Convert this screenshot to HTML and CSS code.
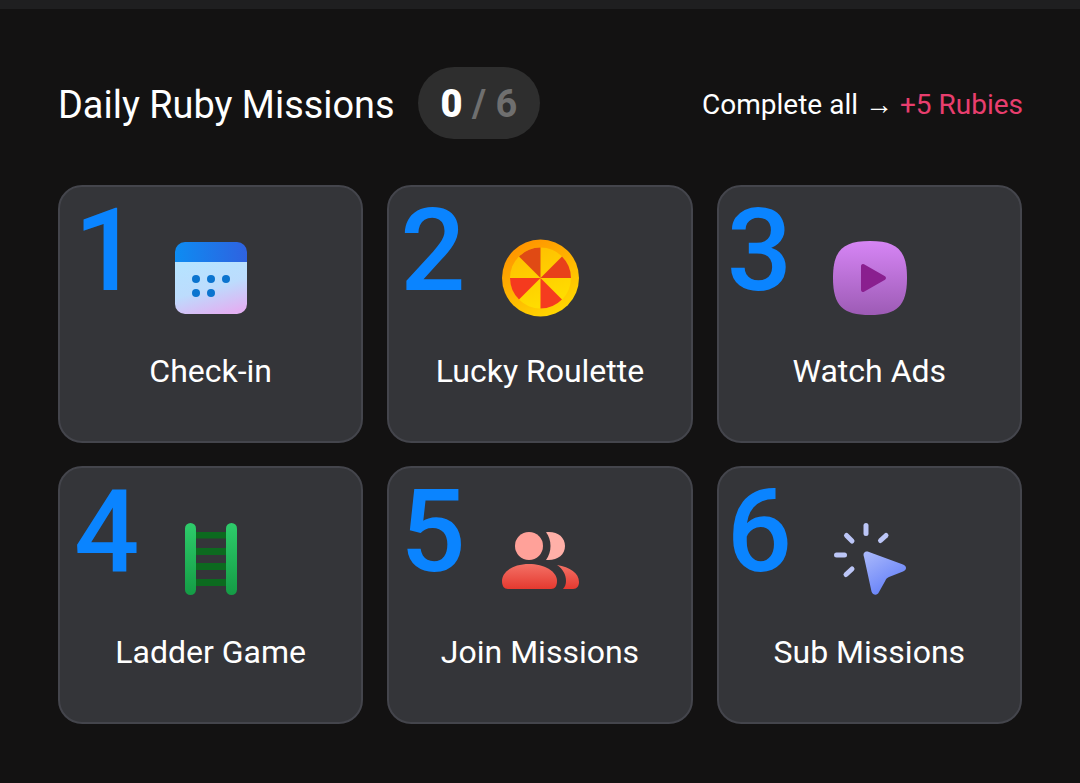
FILE: index.html
```html
<!DOCTYPE html>
<html lang="en">
<head>
  <meta charset="UTF-8">
  <meta name="viewport" content="width=device-width, initial-scale=1.0">
  <title>Daily Ruby Missions</title>
  <link rel="stylesheet" href="styles.css">
</head>
<body>
  <div class="topbar"></div>

  <div class="missions">
    <!-- Header -->
    <div class="header">
      <div class="header-left">
        <h1>Daily Ruby Missions</h1>
        <div class="counter"><b>0</b><span> / 6</span></div>
      </div>
      <p class="reward">Complete all <span class="arrow">→</span> <span class="rubies">+5 Rubies</span></p>
    </div>

    <!-- Mission cards -->
    <div class="grid">
      <div class="card">
        <span class="num">1</span>
        <svg class="icon" viewBox="0 0 80 80">
          <defs>
            <linearGradient id="calTop" x1="0" x2="1" y1="0" y2="0"><stop offset="0" stop-color="#0d8cf2"/><stop offset="1" stop-color="#2f62e0"/></linearGradient>
            <linearGradient id="calBody" x1="0.3" x2="0.7" y1="0" y2="1"><stop offset="0" stop-color="#b6e3ff"/><stop offset="0.5" stop-color="#bcdcfd"/><stop offset="1" stop-color="#e2b0f2"/></linearGradient>
          </defs>
          <path d="M4 24h72v42a10 10 0 0 1-10 10H14a10 10 0 0 1-10-10z" fill="url(#calBody)"/>
          <path d="M14 4h52a10 10 0 0 1 10 10v10H4V14a10 10 0 0 1 10-10z" fill="url(#calTop)"/>
          <g fill="#0b74cf">
            <circle cx="25" cy="41" r="4"/><circle cx="40" cy="41" r="4"/><circle cx="55" cy="41" r="4"/>
            <circle cx="25" cy="55" r="4"/><circle cx="40" cy="55" r="4"/>
          </g>
        </svg>
        <span class="label">Check-in</span>
      </div>
      <div class="card">
        <span class="num">2</span>
        <svg class="icon" viewBox="-1 0 80 80">
          <defs>
            <linearGradient id="rimGrad" x1="0.2" x2="0.8" y1="0" y2="1"><stop offset="0" stop-color="#ff9000"/><stop offset="1" stop-color="#ffdc00"/></linearGradient>
            <linearGradient id="wedgeGrad" x1="0.3" x2="0.7" y1="0" y2="1"><stop offset="0" stop-color="#ffbf00"/><stop offset="1" stop-color="#ffe000"/></linearGradient>
          </defs>
          <circle cx="39.500" cy="40" r="38.500" fill="url(#rimGrad)"/>
          <circle cx="39.500" cy="40" r="30.500" fill="url(#wedgeGrad)"/>
          <g transform="translate(-.5 0)">
            <path d="M40 40V9.500A30.500 30.500 0 0 0 18.500 18.500z" fill="#e04a14"/>
            <path d="M40 40L61.500 18.500A30.500 30.500 0 0 1 70.500 40z" fill="#e8401a"/>
            <path d="M40 40H9.500A30.500 30.500 0 0 0 18.500 61.500z" fill="#f53a1e"/>
            <path d="M40 40V70.500A30.500 30.500 0 0 0 61.500 61.500z" fill="#f53c1f"/>
          </g>
        </svg>
        <span class="label">Lucky Roulette</span>
      </div>
      <div class="card">
        <span class="num">3</span>
        <svg class="icon" viewBox="-1 0 80 80">
          <defs>
            <linearGradient id="playGrad" x1="0" x2="0" y1="0" y2="1"><stop offset="0" stop-color="#d685f5"/><stop offset="1" stop-color="#9d5bb5"/></linearGradient>
          </defs>
          <path d="M40 3C67 3 77 12 77 40S67 77 40 77 3 68 3 40 13 3 40 3z" fill="url(#playGrad)"/>
          <path d="M31 28a2 2 0 0 1 3-1.700l21 12a2 2 0 0 1 0 3.400l-21 12a2 2 0 0 1-3-1.700z" fill="#8a1f8f"/>
        </svg>
        <span class="label">Watch Ads</span>
      </div>
      <div class="card">
        <span class="num">4</span>
        <svg class="icon" viewBox="0 0 80 80">
          <defs>
            <linearGradient id="railGrad" x1="0" x2="0" y1="0" y2="1"><stop offset="0" stop-color="#2ecc6b"/><stop offset="1" stop-color="#149c45"/></linearGradient>
          </defs>
          <g fill="#0c6a1f">
            <rect x="25" y="13" width="31" height="6.500"/><rect x="25" y="29" width="31" height="7"/>
            <rect x="25" y="44" width="31" height="7"/><rect x="25" y="60" width="31" height="7"/>
          </g>
          <rect x="14" y="4" width="11" height="72" rx="5.500" fill="url(#railGrad)"/>
          <rect x="55" y="4" width="11" height="72" rx="5.500" fill="url(#railGrad)"/>
        </svg>
        <span class="label">Ladder Game</span>
      </div>
      <div class="card">
        <span class="num">5</span>
        <svg class="icon" viewBox="-1 0 80 80">
          <defs>
            <linearGradient id="userGrad" x1="0" x2="0" y1="0" y2="1"><stop offset="0" stop-color="#f37166"/><stop offset="1" stop-color="#e5392f"/></linearGradient>
          </defs>
          <path d="M45 13.300C56 12 64 18 64 27S56 42 45 41C51 33 51 21 45 13.300z" fill="#ffb0a8"/>
          <circle cx="28" cy="27" r="14" fill="#ffa199"/>
          <path d="M7 70C3 70 1 67 1 62 1 52 13 45 28 45s28 7 28 17c0 5-2 8-6 8z" fill="url(#userGrad)"/>
          <path d="M56 46C69 48 78 54 78 63c0 4-2 7-6 7H62c2-2 3-5 3-8 0-6-3-12-9-16z" fill="url(#userGrad)"/>
        </svg>
        <span class="label">Join Missions</span>
      </div>
      <div class="card">
        <span class="num">6</span>
        <svg class="icon" viewBox="-1 0 80 80">
          <defs>
            <linearGradient id="arrowGrad" x1="0.1" x2="0.7" y1="0" y2="1"><stop offset="0" stop-color="#a9b8fb"/><stop offset="1" stop-color="#5f7cf8"/></linearGradient>
          </defs>
          <g stroke="#bcc6f7" stroke-width="5" stroke-linecap="round" fill="none">
            <path d="M36 6.500v8"/><path d="M16.500 16.500L22 22"/><path d="M50.500 21.500L56 16.500"/><path d="M6.500 36h8"/><path d="M16 55.500L22 50"/>
          </g>
          <path d="M34 38c-1.500-4 1-6.500 5-5l34 12.500c4 1.500 4 5.500 0 7L59 58c-2 .8-3 2-3.700 3.700L49 73c-1.700 4-6 3.500-7.500-.5z" fill="url(#arrowGrad)"/>
        </svg>
        <span class="label">Sub Missions</span>
      </div>
    </div>
  </div>
</body>
</html>
```

FILE: styles.css
```css
body {
  background-color: #131212;
  color: #fff;
  font-family: 'Roboto', sans-serif;
  margin: 0;
}

.topbar {
  height: 9px;
  background-color: #1f1f20;
}

.missions {
  padding: 58px 58px 0;
}

.header {
  display: flex;
  justify-content: space-between;
  align-items: center;
  height: 72px;
  margin-bottom: 46px;
}

.header-left {
  display: flex;
  align-items: center;
  gap: 23px;
}

h1 {
  font-size: 37.900px;
  font-weight: 400;
  margin: 0;
  padding-top: 4px;
}

.counter {
  height: 72px;
  padding: 0 23px;
  border-radius: 36px;
  background-color: #2e2e2e;
  font-size: 38px;
  line-height: 74px;
  font-weight: 700;
}

.counter span {
  color: #6f6f6f;
}

.reward {
  font-size: 28px;
  margin: 0 -1px 0 0;
  padding-top: 2px;
}

.arrow {
  font-family: 'Liberation Sans', sans-serif;
}

.rubies {
  color: #e83e6e;
}

.grid {
  display: grid;
  grid-template-columns: repeat(3, 1fr);
  grid-auto-rows: 258px;
  gap: 23px 24px;
}

.card {
  position: relative;
  display: flex;
  flex-direction: column;
  align-items: center;
  box-sizing: border-box;
  padding-top: 51px;
  background-color: #343539;
  border: 2px solid #44454c;
  border-radius: 24px;
}

.num {
  position: absolute;
  left: 14px;
  top: 4px;
  font-size: 115px;
  font-weight: 500;
  line-height: 120px;
  color: #0a84ff;
}

.card:nth-child(3n+2) .num {
  left: 11px;
}

.card:nth-child(3n) .num {
  left: 8px;
}

.icon {
  width: 80px;
  height: 80px;
}

.label {
  margin-top: 34px;
  font-size: 32px;
}
```
